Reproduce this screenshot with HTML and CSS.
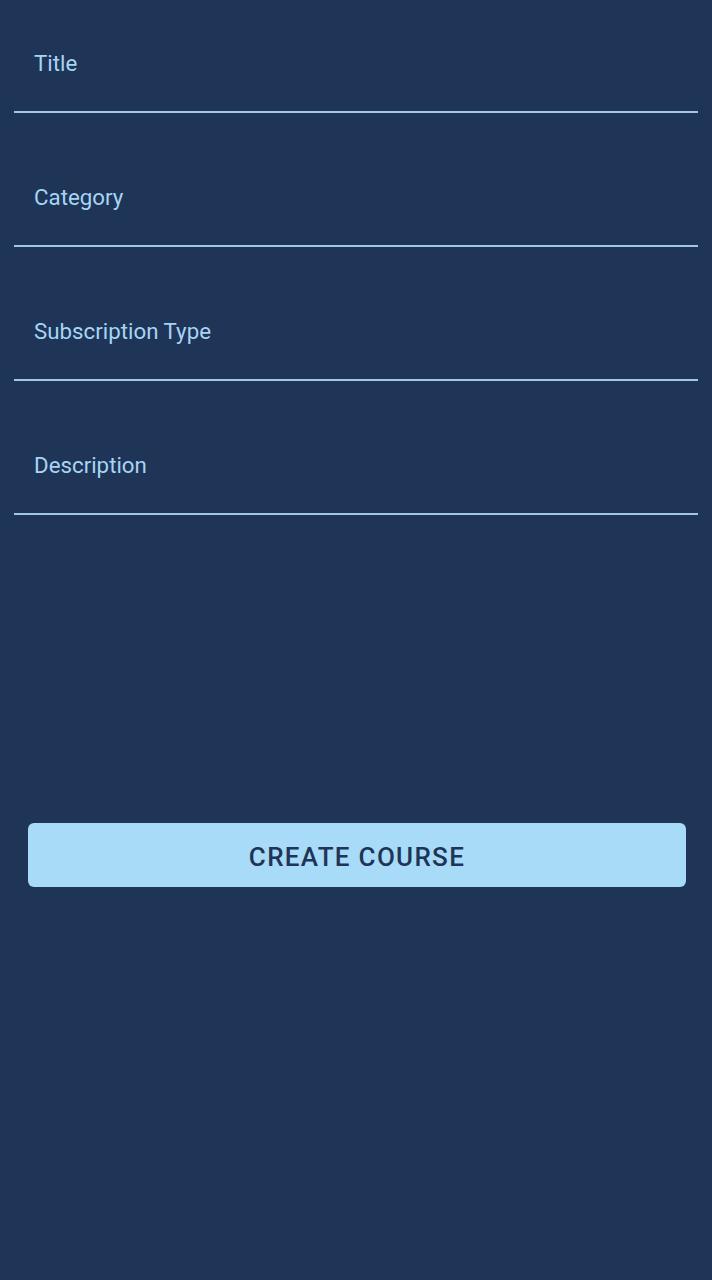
FILE: index.html
```html
<!DOCTYPE html>
<html>
<head>
<meta charset="utf-8">
<link rel="stylesheet" href="styles.css">
</head>
<body>
<div class="screen">
  <form class="form">
    <div class="field"><span class="label">Title</span></div>
    <div class="field"><span class="label">Category</span></div>
    <div class="field"><span class="label">Subscription Type</span></div>
    <div class="field"><span class="label">Description</span></div>
    <button type="button" class="create">CREATE COURSE</button>
  </form>
</div>
</body>
</html>
```
FILE: styles.css
```css
html, body {
  margin: 0;
  padding: 0;
  background: #1e3557;
}
.screen {
  width: 712px;
  height: 1280px;
  background: #1e3557;
  font-family: Roboto, "Noto Sans", sans-serif;
}
.form {
  display: flex;
  flex-direction: column;
  gap: 21px;
  padding: 0 14px;
  margin: 0;
}
.field {
  border-bottom: 2px solid #9ec7e8;
  padding-left: 20px;
  padding-top: 50px;
  height: 61px;
}
.label {
  display: block;
  font-size: 22.3px;
  line-height: 26px;
  color: #a7d4f4;
}
.create {
  margin: 287px 12px 0 14px;
  height: 64px;
  border: none;
  border-radius: 6px;
  background: #a8dbf8;
  color: #1e3557;
  font-family: Roboto, "Noto Sans", sans-serif;
  font-weight: 500;
  font-size: 26px;
  letter-spacing: 1.3px;
  padding: 3px 0 0 0;
}
```
